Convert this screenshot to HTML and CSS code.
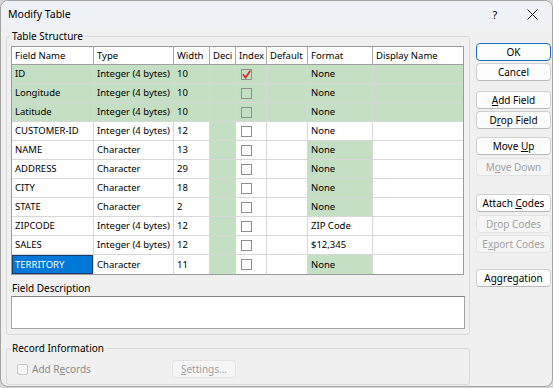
FILE: index.html
```html
<!DOCTYPE html>
<html>
<head>
<meta charset="utf-8">
<link rel="stylesheet" href="styles.css">
</head>
<body>
<div class="window">
  <div class="titlebar">
    <span class="title">Modify Table</span>
    <span class="help">?</span>
    <span class="close"><svg width="11" height="11" viewBox="0 0 11 11"><path d="M0.5 0.5 L10.5 10.5 M10.5 0.5 L0.5 10.5" stroke="#1a1a1a" stroke-width="1" fill="none"/></svg></span>
  </div>
  <div class="content">
    <div class="left">
      <fieldset class="group ts">
        <legend>Table Structure</legend>
        <div class="grid-wrap">
          <table class="grid">
            <colgroup>
              <col class="c1"><col class="c2"><col class="c3"><col class="c4"><col class="c5"><col class="c6"><col class="c7"><col class="c8">
            </colgroup>
            <thead>
              <tr><th>Field Name</th><th>Type</th><th>Width</th><th>Deci</th><th>Index</th><th>Default</th><th>Format</th><th>Display Name</th></tr>
            </thead>
            <tbody>
              <tr class="g"><td>ID</td><td>Integer (4 bytes)</td><td>10</td><td class="gc"></td><td><span class="cb on"><svg width="9" height="9" viewBox="0 0 9 9"><path d="M1 4.2 L3.6 7.6 L8.2 0.6" stroke="#e0141e" stroke-width="1.5" fill="none"/></svg></span></td><td></td><td>None</td><td></td></tr>
              <tr class="g"><td>Longitude</td><td>Integer (4 bytes)</td><td>10</td><td class="gc"></td><td><span class="cb"></span></td><td></td><td>None</td><td></td></tr>
              <tr class="g"><td>Latitude</td><td>Integer (4 bytes)</td><td>10</td><td class="gc"></td><td><span class="cb"></span></td><td></td><td>None</td><td></td></tr>
              <tr><td>CUSTOMER-ID</td><td>Integer (4 bytes)</td><td>12</td><td class="gc"></td><td><span class="cb"></span></td><td></td><td>None</td><td></td></tr>
              <tr><td>NAME</td><td>Character</td><td>13</td><td class="gc"></td><td><span class="cb"></span></td><td></td><td class="gc">None</td><td></td></tr>
              <tr><td>ADDRESS</td><td>Character</td><td>29</td><td class="gc"></td><td><span class="cb"></span></td><td></td><td class="gc">None</td><td></td></tr>
              <tr><td>CITY</td><td>Character</td><td>18</td><td class="gc"></td><td><span class="cb"></span></td><td></td><td class="gc">None</td><td></td></tr>
              <tr><td>STATE</td><td>Character</td><td>2</td><td class="gc"></td><td><span class="cb"></span></td><td></td><td class="gc">None</td><td></td></tr>
              <tr><td>ZIPCODE</td><td>Integer (4 bytes)</td><td>12</td><td class="gc"></td><td><span class="cb"></span></td><td></td><td>ZIP Code</td><td></td></tr>
              <tr><td>SALES</td><td>Integer (4 bytes)</td><td>12</td><td class="gc"></td><td><span class="cb"></span></td><td></td><td>$12,345</td><td></td></tr>
              <tr><td class="sel">TERRITORY</td><td>Character</td><td>11</td><td class="gc"></td><td><span class="cb"></span></td><td></td><td class="gc">None</td><td></td></tr>
            </tbody>
          </table>
        </div>
        <div class="fd-label">Field Description</div>
        <div class="fd-box"></div>
      </fieldset>
      <fieldset class="group ri">
        <legend>Record Information</legend>
        <div class="ri-row">
          <span class="ri-check"><span class="cb2"></span>Add R<u>e</u>cords</span>
          <button class="btn dis settings" disabled><u>S</u>ettings...</button>
        </div>
      </fieldset>
    </div>
    <div class="right">
      <button class="btn ok">OK</button>
      <button class="btn s2">Cancel</button>
      <button class="btn s10"><u>A</u>dd Field</button>
      <button class="btn s2">D<u>r</u>op Field</button>
      <button class="btn s8">Move <u>U</u>p</button>
      <button class="btn dis s3">M<u>o</u>ve Down</button>
      <button class="btn s18">Attach <u>C</u>odes</button>
      <button class="btn dis s3">D<u>r</u>op Codes</button>
      <button class="btn dis s2">E<u>x</u>port Codes</button>
      <button class="btn s16">Aggregation</button>
    </div>
  </div>
</div>
</body>
</html>
```

FILE: styles.css
```css
body {
  margin: 0;
  background: #d6d6d6;
  font-family: "Noto Sans", sans-serif;
  font-size: 10px;
  color: #000;
}

.window {
  width: 553px;
  height: 387px;
  box-sizing: border-box;
  border: 1px solid #a3a3a3;
  border-radius: 8px;
  overflow: hidden;
  background: #f0f0f0;
  display: flex;
  flex-direction: column;
}

.titlebar {
  height: 26px;
  flex: none;
  display: flex;
  align-items: center;
  background: #eef2f7;
  padding-left: 7px;
}

.title {
  font-size: 10.5px;
}

.help {
  margin-left: auto;
  width: 36px;
  text-align: center;
  font-size: 11px;
}

.close {
  width: 39px;
  display: flex;
  justify-content: center;
  align-items: center;
}

.content {
  display: flex;
  padding-left: 5px;
}

.left {
  width: 464px;
  flex: none;
}

.group {
  margin: 0;
  border: 1px solid #d9d9d9;
  border-radius: 3px;
  min-inline-size: 0;
}

.group legend {
  padding: 0 2px;
  margin-left: -1px;
  line-height: 14px;
  font-size: 10px;
}

.ts {
  margin-top: 2px;
  padding: 3px 4px 5px 4px;
}

.grid-wrap {
  border: 1px solid #9c9c9c;
  width: 453px;
  box-sizing: border-box;
  background: #fff;
}

.grid {
  table-layout: fixed;
  border-collapse: separate;
  border-spacing: 0;
  width: 451px;
  font-size: 9.5px;
}

.c1 { width: 82px; }
.c2 { width: 80px; }
.c3 { width: 36px; }
.c4 { width: 26px; }
.c5 { width: 31px; }
.c6 { width: 41px; }
.c7 { width: 65px; }
.c8 { width: 90px; }

.grid thead tr { height: 18px; }
.grid tbody tr { height: 19px; }

.grid th {
  font-weight: normal;
  text-align: left;
  padding: 0 0 0 3px;
  border-right: 1px solid #a9a9a9;
  border-bottom: 1px solid #a0a0a0;
  background: #fff;
  white-space: nowrap;
  overflow: hidden;
  line-height: 1;
  vertical-align: middle;
}

.grid td {
  padding: 0 0 0 3px;
  border-right: 1px solid #d7d7d7;
  border-bottom: 1px solid #d7d7d7;
  background: #fff;
  white-space: nowrap;
  overflow: hidden;
  line-height: 1;
  vertical-align: middle;
}

.grid th:last-child,
.grid td:last-child {
  border-right: none;
}

.grid tbody tr:last-child td {
  border-bottom: none;
}

.grid tr.g td,
.grid td.gc {
  background: #c4dfc3;
}

.grid td.sel {
  background: #0078d7;
  color: #fff;
  box-shadow: inset 0 0 0 1px #1b3d6b;
}

.cb {
  display: inline-block;
  width: 11px;
  height: 11px;
  box-sizing: border-box;
  border: 1px solid #8e8e8e;
  margin-left: 2px;
  vertical-align: middle;
  position: relative;
}

.cb svg {
  display: block;
  margin: 0;
}

.fd-label {
  margin-top: 6px;
  line-height: 14px;
  padding-left: 1px;
}

.fd-box {
  margin-top: 1px;
  height: 33px;
  box-sizing: border-box;
  border: 1px solid #a4a4a4;
  border-top-color: #838383;
  background: #fff;
}

.ri {
  margin-top: 6px;
  padding: 5px 4px 6px 4px;
}

.ri-row {
  display: flex;
  align-items: center;
  height: 18px;
}

.ri-check {
  width: 161px;
  display: flex;
  align-items: center;
  color: #8d8d8d;
}

.cb2 {
  width: 11px;
  height: 11px;
  box-sizing: border-box;
  border: 1px solid #c6c6c6;
  border-radius: 2px;
  background: #f7f7f7;
  margin-left: 6px;
  margin-right: 4px;
}

.right {
  width: 75px;
  margin-left: 6px;
  padding-top: 16px;
  display: flex;
  flex-direction: column;
}

.btn {
  height: 18px;
  box-sizing: border-box;
  border: 1px solid #d0d0d0;
  border-bottom-color: #b9b9b9;
  border-radius: 4px;
  background: #fdfdfd;
  font-family: "Noto Sans", sans-serif;
  font-size: 10px;
  color: #000;
  padding: 0;
  line-height: 15px;
  text-align: center;
}

.btn.ok {
  border: 1px solid #1b6fc2;
}

.btn.dis {
  background: #f5f5f5;
  border-color: #e3e3e3;
  color: #a2a2a2;
}

.settings {
  width: 64px;
}

.s2 { margin-top: 2px; }
.s3 { margin-top: 3px; }
.s8 { margin-top: 8px; }
.s10 { margin-top: 10px; }
.s16 { margin-top: 16px; }
.s18 { margin-top: 18px; }
```
